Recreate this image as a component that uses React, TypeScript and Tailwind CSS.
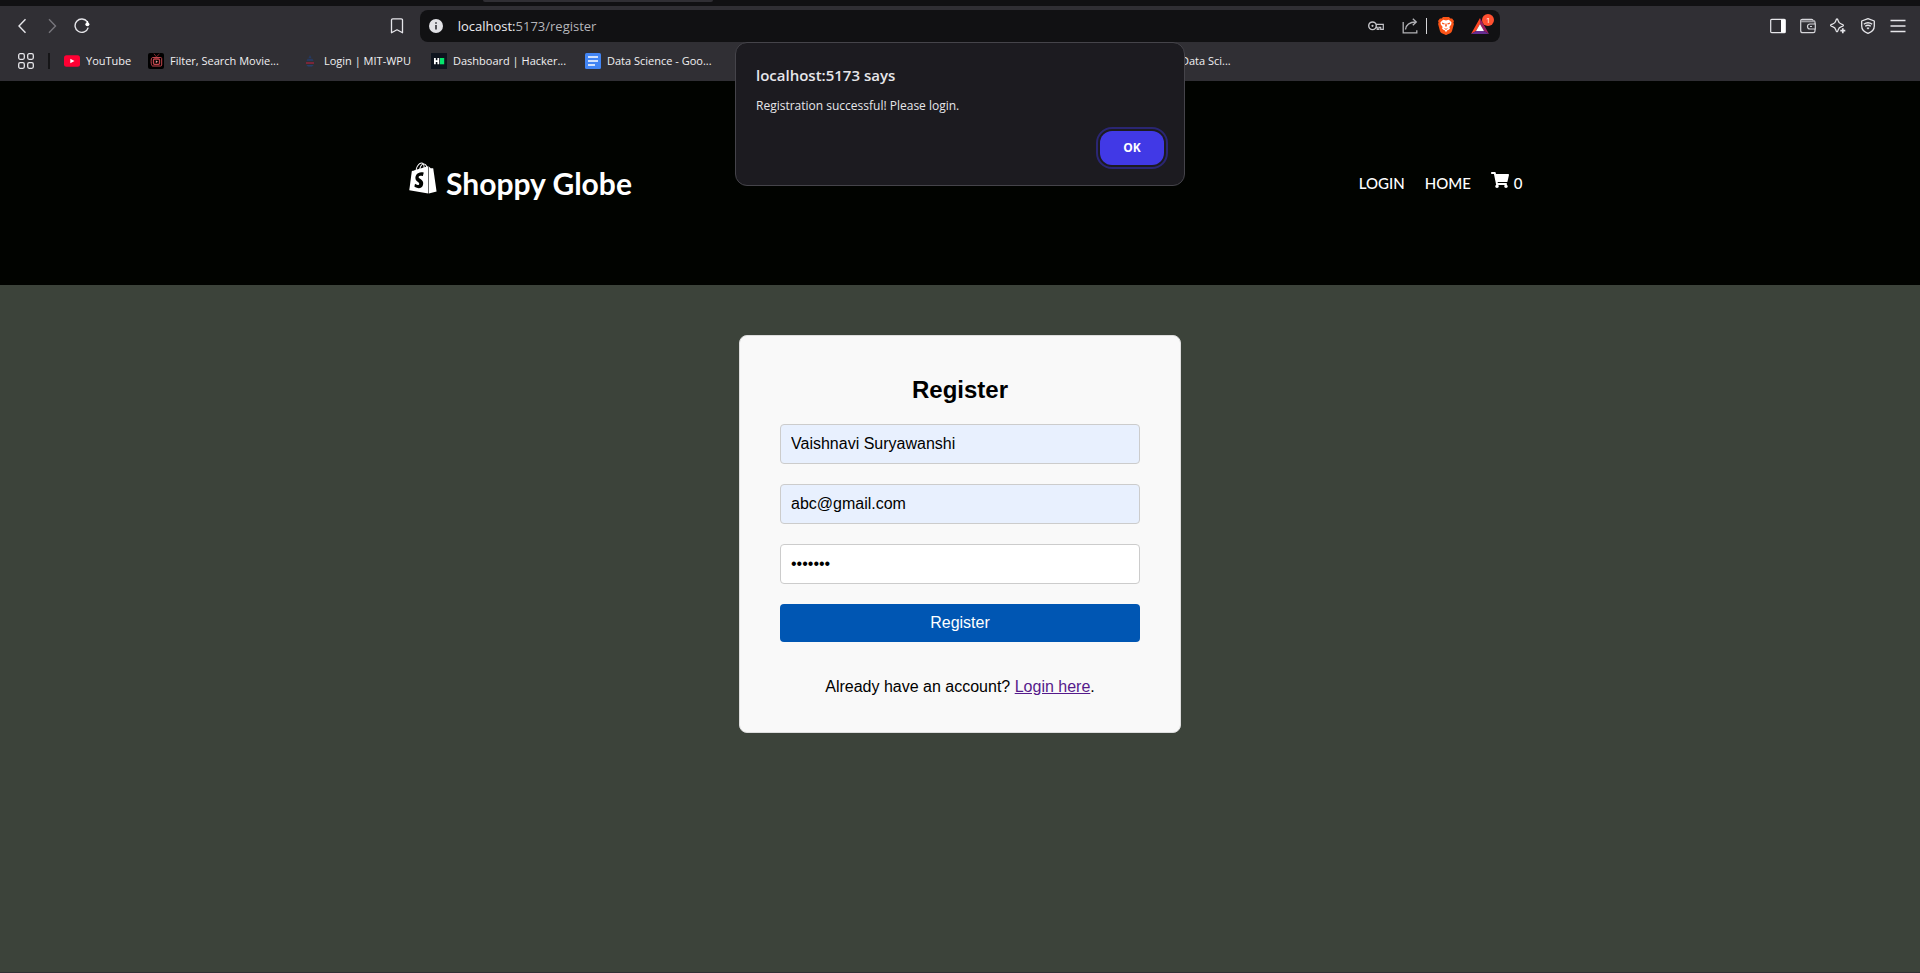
import type { ReactNode } from "react";
import { FaShopify, FaShoppingCart } from "react-icons/fa";

const iconButton = "flex h-5 w-5 items-center justify-center";

function BackIcon() {
  return (
    <svg width="16" height="16" viewBox="0 0 16 16" fill="none" stroke="#e6e6ea" strokeWidth="1.4">
      <path d="M11.5 1.2 5 8l6.500 6.800" />
    </svg>
  );
}

function ForwardIcon() {
  return (
    <svg width="16" height="16" viewBox="0 0 16 16" fill="none" stroke="#77767c" strokeWidth="1.400">
      <path d="M5 1.200 11.500 8 5 14.800" />
    </svg>
  );
}

function ReloadIcon() {
  return (
    <svg width="16" height="16" viewBox="0 0 16 16" fill="none">
      <path d="M14.200 9.600A6.700 6.700 0 1 1 13.200 3.700" stroke="#e6e6ea" strokeWidth="1.400" />
      <circle cx="13.400" cy="6.200" r="2" fill="#ffffff" />
      <path d="M13.400 6.200V3" stroke="#ffffff" strokeWidth="1.400" />
    </svg>
  );
}

function BookmarkIcon() {
  return (
    <svg width="16" height="16" viewBox="0 0 16 16" fill="none" stroke="#e6e6ea" strokeWidth="1.300" strokeLinejoin="round">
      <path d="M3.700.8h8.600a1.200 1.200 0 0 1 1.200 1.200v12.800L8 11.800l-5.500 3V2A1.200 1.200 0 0 1 3.700.8Z" />
    </svg>
  );
}

function KeyIcon() {
  return (
    <svg width="16" height="10" viewBox="0 0 16 10" fill="none" stroke="#c4c4c8" strokeWidth="1.400">
      <circle cx="4.500" cy="4.800" r="3.800" />
      <circle cx="4.500" cy="4.800" r="1.100" fill="#c4c4c8" stroke="none" />
      <path d="M8 3.300h7.300v5h-2.600V6.300h-1.800v2H9.200V6.300H8" strokeWidth="1.200" />
    </svg>
  );
}

function ShareIcon() {
  return (
    <svg width="16" height="16" viewBox="0 0 16 16" fill="none" stroke="#b2b2b6" strokeWidth="1.300">
      <path d="M1.200 4v10.800h13.600v-2.500" />
      <path d="M3.500 11.500C4 6.800 7.500 4.200 14 4" />
      <path d="m10.800.7 3.500 3.300-3.500 3.300" />
    </svg>
  );
}

function BraveIcon() {
  return (
    <svg width="16" height="18" viewBox="0 0 16 18">
      <path d="M5 0h6l1.400 1.600 1.700-.2L16 4l-.6 1.600.5 1.500-1.800 6.600c-.3 1.200-1 1.900-1.900 2.500L8.700 17.800a1.300 1.300 0 0 1-1.400 0l-3.500-1.600c-.9-.6-1.600-1.300-1.900-2.500L.1 7.100l.5-1.500L0 4l1.900-2.600 1.700.2Z" fill="#fb5417" />
      <path d="m5.200 2.800 2.800.6 2.800-.6 2.700 2.500-.3 2.100-1.900 2.700.7 1.500-1.700 1.300-1 .4L8 15.200l-1.300-1.900-1-.4L4 11.600l.7-1.500-1.900-2.700-.3-2.100Z" fill="#fff" />
      <path d="m4 5.600 2.800.8-.5 1.200-2.100-.7ZM12 5.600l-2.800.8.5 1.200 2.100-.7ZM7.500 6.500h1l.4 2.600L8 10l-.9-.9ZM5.700 10.700 8 11.800l2.300-1.100L8 13Z" fill="#fb5417" />
    </svg>
  );
}

function RewardsIcon() {
  return (
    <svg width="18" height="16" viewBox="0 0 18 16">
      <path d="M9 0 0 16l5-3 4-7Z" fill="#ff4724" />
      <path d="m9 0 9 16-5-3-4-7Z" fill="#9e1f63" />
      <path d="M0 16h18l-5-3H5Z" fill="#662d91" />
      <path d="m9 6 4 7H5Z" fill="#fff" />
    </svg>
  );
}

function SidebarIcon() {
  return (
    <svg width="16" height="16" viewBox="0 0 16 16" fill="none" stroke="#e6e6ea" strokeWidth="1.200">
      <rect x=".7" y="1.300" width="14.600" height="13.400" rx="1" />
      <path d="M11 1.500h4.200v13H11Z" fill="#fff" stroke="none" />
    </svg>
  );
}

function WalletIcon() {
  return (
    <svg width="16" height="16" viewBox="0 0 16 16" fill="none" stroke="#d6d6da" strokeWidth="1.200">
      <path d="M15 6V4.200c0-.8-.5-1.300-1.200-1.300H13c0-1-.5-1.500-1.300-1.500H2.300C1.400 1.400.7 2 .7 2.900v9.800c0 1.200.8 2 2 2h10.600c1 0 1.700-.7 1.700-1.700V11" />
      <path d="M1 3.300h13.500" strokeWidth="2" stroke="#9b9a9f" />
      <path d="M15.300 6H10a2.500 2.500 0 0 0 0 5h5.300ZM10 8.500h2" />
    </svg>
  );
}

function SparkleIcon() {
  return (
    <svg width="16" height="16" viewBox="0 0 16 16" fill="none" stroke="#e6e6ea" strokeWidth="1.300" strokeLinejoin="round">
      <path d="M7 1c.7 0 .9.600 1.200 1.900.5 2 1.300 2.800 3.300 3.300 1.300.3 1.900.5 1.900 1.200s-.6.900-1.900 1.200c-2 .5-2.800 1.300-3.300 3.300C7.900 13.200 7.700 13.800 7 13.800s-.9-.6-1.200-1.900c-.5-2-1.300-2.800-3.300-3.300C1.200 8.300.6 8.100.6 7.400s.6-.9 1.900-1.200c2-.5 2.800-1.300 3.300-3.300C6.100 1.600 6.300 1 7 1Z" />
      <path d="M12.800 10.200v5M10.300 12.700h5" strokeWidth="1.700" />
    </svg>
  );
}

function VpnIcon() {
  return (
    <svg width="16" height="16" viewBox="0 0 16 16" fill="none" stroke="#e6e6ea" strokeWidth="1.300">
      <path d="M8 .7 14.300 3v5c0 3.600-2.300 6-6.300 7.400C4 14 1.700 11.600 1.700 8V3Z" strokeLinejoin="round" />
      <path d="M3.800 6.300c2.600-1.900 5.800-1.900 8.400 0M5.200 8.200c1.800-1.200 3.800-1.200 5.600 0" />
      <path d="M6.500 10c1-.6 2-.6 3 0L8 11.600Z" fill="#e6e6ea" stroke="none" />
    </svg>
  );
}

function MenuIcon() {
  return (
    <svg width="16" height="16" viewBox="0 0 16 16" stroke="#e6e6ea" strokeWidth="1.300">
      <path d="M.5 2.500h15M.5 8h15M.5 13.500h15" />
    </svg>
  );
}

function GridIcon() {
  return (
    <svg width="16" height="16" viewBox="0 0 16 16" fill="none" stroke="#e6e6ea" strokeWidth="1.300">
      <rect x=".7" y=".7" width="5.600" height="5.600" rx="1.500" />
      <rect x="9.700" y=".7" width="5.600" height="5.600" rx="1.500" />
      <rect x=".7" y="9.700" width="5.600" height="5.600" rx="1.500" />
      <rect x="9.700" y="9.700" width="5.600" height="5.600" rx="1.500" />
    </svg>
  );
}

function YouTubeIcon() {
  return (
    <svg width="16" height="16" viewBox="0 0 16 16">
      <rect y="2.300" width="16" height="11.400" rx="2.500" fill="#ff0033" />
      <path d="M6.300 5.700 10.500 8l-4.200 2.300Z" fill="#fff" />
    </svg>
  );
}

function MovieIcon() {
  return (
    <svg width="16" height="16" viewBox="0 0 16 16" fill="none" stroke="#c2454c" strokeWidth="1">
      <rect width="16" height="16" rx="2" fill="#000" stroke="none" />
      <path d="m6 .8 2.300 3L11.500 1" stroke="#7d2a30" />
      <path d="M4.500 4.500h8.200c.6 0 1 .4 1 1V12c0 .6-.4 1-1 1H4.500c-1.600 0-2-8.500 0-8.500Z" />
      <rect x="5.500" y="6" width="6" height="5.300" rx="1" strokeWidth="1.300" />
      <path d="m7.800 7.200 2.200 1.500-2.200 1.400Z" fill="#e0a09a" stroke="none" />
    </svg>
  );
}

function CollegeIcon() {
  return (
    <svg width="16" height="16" viewBox="0 0 16 16">
      <path d="M8 2 9.500 5h-3ZM5.500 5.800h5l1 2.200h-7Z" fill="#26395f" />
      <path d="M4 9h8v2H4Z" fill="#7a2638" />
      <path d="M4.300 12h7.400L10 13.500H6Z" fill="#263f6c" />
    </svg>
  );
}

function HackerIcon() {
  return (
    <svg width="16" height="16" viewBox="0 0 16 16">
      <rect width="16" height="16" fill="#0e141e" />
      <path d="M3 5h1.800v2.200h1.600V5h1.800v6.300H6.400V9H4.800v2.300H3Z" fill="#fff" />
      <path d="M9 5h4.200v6.300H9Z" fill="#05e56c" />
    </svg>
  );
}

function DocsIcon() {
  return (
    <svg width="16" height="16" viewBox="0 0 16 16">
      <rect width="16" height="16" rx="1.500" fill="#4285f4" />
      <path d="M3 4h10M3 8h10M3 12h7" stroke="#fff" strokeWidth="1.700" />
    </svg>
  );
}

function ToolButton({ label, children }: { label: string; children: ReactNode }) {
  return (
    <button type="button" aria-label={label} className={iconButton}>
      {children}
    </button>
  );
}

function Bookmark({ icon, label, width }: { icon: ReactNode; label: string; width: string }) {
  return (
    <a href="#" className="flex shrink-0 items-center gap-1.5">
      {icon}
      <span className={`whitespace-nowrap ${width}`}>{label}</span>
    </a>
  );
}

function BrowserBar() {
  return (
    <div className="bg-[#302f34] font-['Open_Sans',sans-serif] text-[#f0f0f2]">
      <div className="flex h-1.5 bg-[#111113] pl-[483px]">
        <div className="h-0.5 w-[230px] rounded-b-sm bg-[#302f34]" />
      </div>
      <div className="flex h-10 items-center px-3">
        <div className="flex flex-1 items-center justify-between">
          <div className="flex gap-2.5">
            <ToolButton label="Back"><BackIcon /></ToolButton>
            <ToolButton label="Forward"><ForwardIcon /></ToolButton>
            <ToolButton label="Reload"><ReloadIcon /></ToolButton>
          </div>
          <div className="pr-[13px]">
            <ToolButton label="Bookmark this page"><BookmarkIcon /></ToolButton>
          </div>
        </div>
        <div className="flex h-8 w-[57%] items-center rounded-lg bg-[#111113] pr-2.5 pl-2">
          <button type="button" aria-label="Site information" className="flex h-4 w-4 items-center justify-center">
            <svg width="14" height="14" viewBox="0 0 14 14">
              <circle cx="7" cy="7" r="7" fill="#e2e2e6" />
              <path d="M7 3.200v1.600M7 6v4.500" stroke="#3a3a40" strokeWidth="1.700" />
            </svg>
          </button>
          <div className="flex-1 pl-[14px] text-[13px] leading-5 text-[#b5b5ba]">
            <span className="text-[#ececf0]">localhost:</span>5173/register
          </div>
          <div className="flex items-center">
            <ToolButton label="Passwords"><KeyIcon /></ToolButton>
            <div className="w-[14px]" />
            <ToolButton label="Share"><ShareIcon /></ToolButton>
            <div className="mr-[9px] ml-1.5 h-4 w-px bg-[#d5d5d8]" />
            <ToolButton label="Brave Shields"><BraveIcon /></ToolButton>
            <button type="button" aria-label="Brave Rewards" className="relative ml-[14px] flex h-5 w-5 items-center justify-center">
              <RewardsIcon />
              <span className="absolute -top-0.5 -right-1 flex h-3 w-3 items-center justify-center rounded-full bg-[#ff5030] text-[8px] leading-3 text-white">1</span>
            </button>
          </div>
        </div>
        <div className="flex flex-1 justify-end gap-2.5">
          <ToolButton label="Sidebar"><SidebarIcon /></ToolButton>
          <ToolButton label="Wallet"><WalletIcon /></ToolButton>
          <ToolButton label="Leo AI"><SparkleIcon /></ToolButton>
          <ToolButton label="VPN"><VpnIcon /></ToolButton>
          <ToolButton label="Menu"><MenuIcon /></ToolButton>
        </div>
      </div>
      <nav className="flex h-[35px] items-center px-[18px] pb-1.5 text-[11px] leading-4">
        <button type="button" aria-label="All bookmarks"><GridIcon /></button>
        <div className="mx-[14px] h-4 w-0.5 bg-[#151517]" />
        <div className="flex flex-1 items-center gap-4">
          <Bookmark icon={<YouTubeIcon />} label="YouTube" width="w-[46px]" />
          <Bookmark icon={<MovieIcon />} label="Filter, Search Movie..." width="w-[116px]" />
          <Bookmark icon={<CollegeIcon />} label="Login | MIT-WPU" width="w-[91px]" />
          <Bookmark icon={<HackerIcon />} label="Dashboard | Hacker..." width="w-[116px]" />
          <Bookmark icon={<DocsIcon />} label="Data Science - Goo..." width="w-[112px]" />
          <a href="#" className="ml-[446px]">Data Sci...</a>
        </div>
      </nav>
    </div>
  );
}

function AlertDialog() {
  return (
    <div
      role="alertdialog"
      aria-labelledby="alert-title"
      aria-describedby="alert-message"
      className="absolute top-[42px] left-1/2 w-[450px] -translate-x-1/2 rounded-xl border border-[#45444a] bg-[#1c1b20] p-5 font-['Open_Sans',sans-serif] text-[#e6e6ea]"
    >
      <h2 id="alert-title" className="text-[15px] leading-6 font-semibold">localhost:5173 says</h2>
      <p id="alert-message" className="mt-[9px] text-[12px] leading-5">Registration successful! Please login.</p>
      <div className="mt-[15px] flex justify-end">
        <button
          type="button"
          className="h-[34px] w-16 rounded-xl bg-[#4139e6] text-[12px] font-bold text-white outline-2 outline-offset-2 outline-[#2a2673]"
        >
          OK
        </button>
      </div>
    </div>
  );
}

function SiteHeader() {
  return (
    <header className="flex h-[204px] items-center justify-between bg-[#010300] pr-[20.700%] pl-[21.200%] font-[Lato,sans-serif] text-white">
      <a href="#" className="flex items-center gap-[7px]">
        <FaShopify size={32} className="mb-2.5" />
        <span className="text-[30px] leading-9 font-bold">Shoppy Globe</span>
      </a>
      <nav className="flex items-center gap-5 text-[15px] leading-5 font-medium">
        <a href="#">LOGIN</a>
        <a href="#">HOME</a>
        <a href="#" aria-label="Cart" className="flex items-center gap-[5px]">
          <FaShoppingCart size={18} className="mb-1.5" />
          <span>0</span>
        </a>
      </nav>
    </header>
  );
}

const field = "h-10 w-full rounded border border-[#cccccc] px-2.5 text-[16px] text-black";

function RegisterForm() {
  return (
    <form className="mx-auto mt-[50px] w-full max-w-[442px] rounded-lg border border-[#dddddd] bg-[#f9f9f9] px-10 pt-10 pb-9 font-['Liberation_Sans',sans-serif] text-[16px] text-black">
      <h2 className="mb-5 text-center text-2xl leading-7 font-bold">Register</h2>
      <div className="flex flex-col gap-5">
        <input aria-label="Name" type="text" defaultValue="Vaishnavi Suryawanshi" className={`${field} bg-[#e8f0fe]`} />
        <input aria-label="Email" type="email" defaultValue="abc@gmail.com" className={`${field} bg-[#e8f0fe]`} />
        <input aria-label="Password" type="password" defaultValue="1234567" className={`${field} bg-white`} />
        <button type="button" className="h-[38px] rounded bg-[#0056b3] text-white">Register</button>
      </div>
      <p className="mt-9 text-center leading-[18px]">
        Already have an account?{" "}
        <a href="#" className="text-[#551a8b] underline">Login here</a>.
      </p>
    </form>
  );
}

export default function App() {
  return (
    <div className="relative min-h-screen border-b border-[#302f34] bg-[#3c433a]">
      <BrowserBar />
      <SiteHeader />
      <main>
        <RegisterForm />
      </main>
      <AlertDialog />
    </div>
  );
}
